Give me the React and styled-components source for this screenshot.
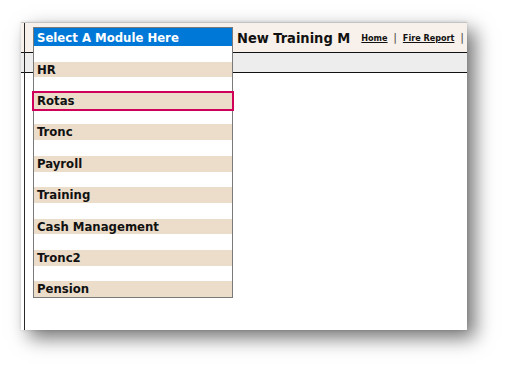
import styled, { createGlobalStyle } from 'styled-components';

const GlobalStyle = createGlobalStyle`
	html, body {
		margin: 0;
		padding: 0;
		background: #ffffff;
	}
	body {
		font-family: "DejaVu Sans Condensed", "DejaVu Sans", sans-serif;
	}
`;

const modules = ['HR', 'Rotas', 'Tronc', 'Payroll', 'Training', 'Cash Management', 'Tronc2', 'Pension'];

const Stage = styled.div`
	width: 509px;
	height: 372px;
	padding: 22px 0 0 21px;
	box-sizing: border-box;
`;

const Panel = styled.div`
	position: relative;
	width: 446px;
	height: 308px;
	box-sizing: border-box;
	border-top: 1px solid #c4c4c4;
	background: #ffffff;
	overflow: hidden;
	box-shadow: 8px 8px 18px rgba(0, 0, 0, 0.55), 0 0 3px rgba(0, 0, 0, 0.12);

	&::after {
		content: '';
		position: absolute;
		left: 3px;
		top: 0;
		bottom: 0;
		width: 1px;
		background: #2a2a2a;
	}
`;

const Header = styled.div`
	height: 29px;
	display: flex;
	align-items: center;
	background: #f8f0ea;
	border-bottom: 1px solid #111111;
	white-space: nowrap;
	overflow: hidden;
`;

const Title = styled.div`
	flex-shrink: 0;
	margin-left: 216px;
	font-size: 14.5px;
	font-weight: bold;
	color: #111111;
`;

const Links = styled.nav`
	flex-shrink: 0;
	display: flex;
	align-items: center;
	margin-left: 11px;
	gap: 6px;
	font-size: 9px;
	font-weight: bold;
`;

const NavLink = styled.a`
	color: #111111;
	text-decoration: underline;
`;

const Sep = styled.span`
	color: #555555;
	font-weight: bold;
	font-size: 10px;
`;

const Toolbar = styled.div`
	height: 19px;
	background: #ededed;
	border-bottom: 1px solid #111111;
`;

const ModuleList = styled.div`
	position: absolute;
	left: 12px;
	top: 4px;
	width: 200px;
	box-sizing: border-box;
	border: 1px solid #7a7a7a;
	background: #ffffff;
	z-index: 2;
`;

const ListHead = styled.div`
	height: 18px;
	line-height: 19px;
	padding-left: 3px;
	background: #0078d7;
	color: #ffffff;
	font-size: 13px;
	font-weight: bold;
`;

const Option = styled.div`
	position: relative;
	z-index: ${(p) => (p.$marked ? 1 : 0)};
	height: 15.7px;
	line-height: 16px;
	padding-left: 3px;
	font-size: 13px;
	font-weight: bold;
	color: #111111;
	background: ${(p) => (p.$blank ? '#ffffff' : '#ecdcca')};
	outline: ${(p) => (p.$marked ? '2px solid #d0005a' : 'none')};
`;

export default function App() {
	return (
		<>
			<GlobalStyle />
			<Stage>
				<Panel>
					<Header>
						<Title>New Training M</Title>
						<Links>
							<NavLink>Home</NavLink>
							<Sep>|</Sep>
							<NavLink>Fire Report</NavLink>
							<Sep>|</Sep>
						</Links>
					</Header>
					<Toolbar />
					<ModuleList>
						<ListHead>Select A Module Here</ListHead>
						{modules.map((name) => (
							<div key={name}>
								<Option $blank />
								<Option $marked={name === 'Rotas'}>{name}</Option>
							</div>
						))}
					</ModuleList>
				</Panel>
			</Stage>
		</>
	);
}
